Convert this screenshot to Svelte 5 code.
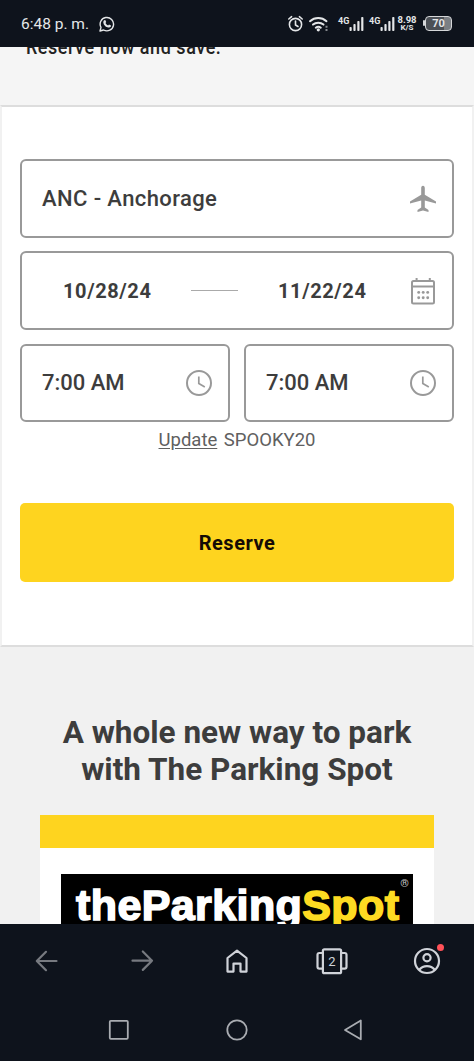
<script>
    let airport = "ANC - Anchorage";
    let startDate = "10/28/24";
    let endDate = "11/22/24";
    let times = ["7:00 AM", "7:00 AM"];
    let promoCode = "SPOOKY20";
    let tabCount = 2;

    // left edge of each signal indicator inside the status icons
    const signals = [41, 72];
    const bars = [4, 7, 10, 14];
    const dots = [8.5, 13, 17.5];
</script>

<div class="screen">
    <header class="status-bar">
        <span class="clock">6:48 p. m.</span>
        <svg class="whatsapp" width="16" height="16" viewBox="0 0 16 16">
            <path d="M1 15l1-3.600A6.700 6.700 0 1 1 4.600 14z" fill="none" stroke="currentColor" stroke-width="1.400" stroke-linejoin="round" />
            <path d="M5.200 4.200l1.100-.1.900 2-.7.9c.6 1.200 1.400 2 2.600 2.500l.9-.9 2 1-.1 1c-.7 1-2 1.300-3.500.7C6.200 10.500 4.800 8.800 4.400 6.900c-.2-1 0-2.100.8-2.700z" fill="currentColor" />
        </svg>
        <svg class="status-icons" width="109" height="24" viewBox="0 0 109 24">
            <g fill="none" stroke="currentColor" stroke-width="1.600" stroke-linecap="round">
                <circle cx="7.500" cy="12.500" r="6.100" />
                <path d="M7.500 9v4l2.500 1.500M.8 7L3.600 4.700M14.200 7l-2.800-2.300" />
                <path d="M22 9.200a12.500 12.500 0 0 1 16.500 0M25 12.600a8 8 0 0 1 10.500 0M27.800 15.700a4 4 0 0 1 5 0" stroke-width="2" />
            </g>
            <circle cx="30.300" cy="17.800" r="1.600" fill="currentColor" />
            <path d="M37.500 13.800h2v2h-2zM37.500 17h2v2h-2z" fill="#85898e" />
            {#each signals as x}
                <text x={x + 9} y="11.800" class="net">4G</text>
                {#each bars as h, i}
                    <rect x={x + 20.5 + i * 3.9} y={19 - h} width="2.200" height={h} rx=".8" fill="currentColor" />
                {/each}
            {/each}
        </svg>
        <span class="speed"><b>8.98</b><b>K/S</b></span>
        <span class="battery">70</span>
    </header>

    <main class="page">
        <section class="intro"><span>Reserve now and save.</span></section>

        <section class="booking">
            <div class="field">
                <span class="airport">{airport}</span>
                <svg width="28" height="28" viewBox="0 0 28 28">
                    <path d="M14 .8c1.300 0 1.800 1.100 1.800 2.400v6.600l11.200 6.600v2l-11.200-3v7.100l3.700 2.600v1.800L14 25.600l-5.500 1.300v-1.800l3.700-2.600v-7.100L1 18.400v-2l11.200-6.600V3.200C12.200 1.900 12.700.8 14 .8z" fill="#999" />
                </svg>
            </div>

            <div class="field dates">
                <span class="date">{startDate}</span>
                <span class="dash"></span>
                <span class="date end">{endDate}</span>
                <svg width="28" height="28" viewBox="0 0 28 28">
                    <g fill="none" stroke="#999" stroke-width="2">
                        <rect x="3" y="4" width="22" height="22.500" rx="1.500" />
                        <path d="M3 9.600h22M7.600 1v3M20.800 1v3" />
                    </g>
                    {#each dots as x}
                        <circle cx={x + 1.2} cy="15.400" r="1.450" fill="#999" />
                        <circle cx={x + 1.2} cy="20.800" r="1.450" fill="#999" />
                    {/each}
                </svg>
            </div>

            <div class="times">
                {#each times as time}
                    <div class="field">
                        <span class="time">{time}</span>
                        <svg width="28" height="28" viewBox="0 0 28 28">
                            <circle cx="14" cy="14" r="12" fill="none" stroke="#999" stroke-width="2" />
                            <path d="M13.800 7.500v7l6 3.500" fill="none" stroke="#999" stroke-width="1.700" />
                        </svg>
                    </div>
                {/each}
            </div>

            <p class="promo"><a href="#update">Update</a> <span>{promoCode}</span></p>
            <button class="reserve">Reserve</button>
        </section>

        <section class="about">
            <h2>A whole new way to park<br />with The Parking Spot</h2>
            <div class="card">
                <div class="logo">
                    <span class="brand">theParking<em>Spot</em></span>
                    <span class="registered">®</span>
                </div>
            </div>
        </section>
    </main>

    <footer>
        <nav class="browser-nav">
            <svg class="dim" width="32" height="32" viewBox="0 0 32 32">
                <path d="M25.500 16H6M15 6.800L5.800 16l9.200 9.200" />
            </svg>
            <svg class="dim" width="32" height="32" viewBox="0 0 32 32">
                <path d="M6.500 15.700H26M16.800 6.500l9.200 9.200-9.200 9.200" />
            </svg>
            <svg width="32" height="32" viewBox="0 0 32 32">
                <path d="M6.500 13L16 5.600l9.500 7.400v13.600h-6v-8h-7v8h-6z" />
            </svg>
            <svg width="32" height="32" viewBox="0 0 32 32">
                <rect x="6.900" y="4.300" width="18.200" height="23.900" rx="1.500" />
                <path d="M6.900 8H3.300q-1.800 0-1.800 1.800v12q0 1.800 1.800 1.800h3.600M25.100 8h3.600q1.800 0 1.800 1.800v12q0 1.800-1.800 1.800h-3.600" />
                <text x="16" y="20.500" text-anchor="middle">{tabCount}</text>
            </svg>
            <span class="profile">
                <svg width="32" height="32" viewBox="0 0 32 32">
                    <circle cx="16" cy="16" r="12" />
                    <circle cx="16" cy="12.800" r="3.600" />
                    <path d="M8.500 24.500c3.500-4.600 11.500-4.600 15 0" />
                </svg>
                <i class="alert"></i>
            </span>
        </nav>
        <nav class="system-nav">
            <svg width="28" height="28" viewBox="0 0 28 28">
                <rect x="4.800" y="4.800" width="18" height="18" rx="1" />
            </svg>
            <svg width="28" height="28" viewBox="0 0 28 28">
                <circle cx="14" cy="14" r="9.700" />
            </svg>
            <svg width="28" height="28" viewBox="0 0 28 28">
                <path d="M20.800 4.500v18.800L5 13.900z" />
            </svg>
        </nav>
    </footer>
</div>

<style>
    :global(body) {
        margin: 0;
        background: #0e131c;
    }

    .screen {
        display: flex;
        flex-direction: column;
        width: 474px;
        height: 1061px;
        overflow: hidden;
        font-family: Roboto, "Liberation Sans", sans-serif;
        color: #3d3d3d;
    }

    .screen * {
        box-sizing: border-box;
    }

    svg {
        display: block;
        flex: none;
    }

    .status-bar {
        display: flex;
        align-items: center;
        height: 47px;
        flex: none;
        padding: 0 21px;
        background: #0e131c;
        color: #e4e6e8;
    }

    .clock {
        width: 78px;
        font-size: 15.5px;
        white-space: nowrap;
    }

    .status-icons {
        margin-left: 173px;
        overflow: visible;
    }

    .net {
        font-size: 9px;
        font-weight: 700;
        fill: currentColor;
    }

    .speed {
        display: flex;
        flex-direction: column;
        align-items: center;
        width: 20px;
        font-size: 9.5px;
        line-height: 8px;
    }

    .speed b:last-child {
        font-size: 8px;
        line-height: 7px;
    }

    .battery {
        position: relative;
        width: 27px;
        height: 15px;
        margin-left: 8px;
        flex: none;
        border: 1.5px solid #d5d7d9;
        border-radius: 4px;
        background: linear-gradient(90deg, #4c5056 72%, #7b7f84 72%);
        font-size: 11px;
        font-weight: 700;
        line-height: 13px;
        text-align: center;
    }

    .battery::before {
        content: "";
        position: absolute;
        left: -3px;
        top: 3px;
        width: 2px;
        height: 6px;
        border-radius: 1px;
        background: #d5d7d9;
    }

    .page {
        flex: none;
        height: 877px;
        overflow: hidden;
        background: #f1f1f1;
    }

    .intro {
        height: 58px;
        padding-left: 26px;
        overflow: hidden;
        background: #f5f5f5;
        color: #222;
        font-size: 20px;
        line-height: 22px;
    }

    .intro span {
        display: block;
        width: 220px;
        margin-top: -11px;
        letter-spacing: 0.6px;
        white-space: nowrap;
        font-weight: 500;
        transform: scaleX(0.9);
        transform-origin: left;
    }

    .booking {
        height: 542px;
        padding: 52px 18px 0;
        border: 2px solid #f1f1f1;
        border-top-color: #ddd;
        border-bottom-color: #ddd;
        background: #fff;
    }

    .field {
        display: flex;
        align-items: center;
        justify-content: space-between;
        height: 79px;
        padding: 0 15px 0 20px;
        border: 2px solid #999;
        border-radius: 6px;
    }

    .airport {
        font-size: 22px;
        font-weight: 500;
        letter-spacing: 0.4px;
    }

    .dates {
        margin: 13px 0 14px;
        padding-left: 41px;
    }

    .date {
        width: 88px;
        font-size: 20px;
        font-weight: 700;
        letter-spacing: 0.6px;
        white-space: nowrap;
    }

    .date.end {
        margin-right: 3px;
    }

    .dash {
        width: 47px;
        height: 1px;
        background: #aaa;
    }

    .times {
        display: grid;
        grid-template-columns: 210px 210px;
        gap: 14px;
    }

    .times .field {
        height: 78px;
    }

    .time {
        margin-top: -1px;
        font-size: 22px;
        font-weight: 500;
    }

    .promo {
        margin: 6px 0 0;
        height: 24px;
        font-size: 18.5px;
        line-height: 24px;
        text-align: center;
        word-spacing: 2px;
        color: #606060;
    }

    .promo a {
        color: inherit;
        text-underline-offset: 2px;
    }

    .reserve {
        display: block;
        width: 100%;
        height: 79px;
        margin-top: 51px;
        border: 0;
        border-radius: 5px;
        background: #fed41f;
        color: #150b05;
        font: 700 20px Roboto, sans-serif;
        letter-spacing: 0.5px;
    }

    .about {
        padding: 67px 40px 0;
    }

    h2 {
        margin: 0;
        font-size: 31.5px;
        font-weight: 700;
        line-height: 37px;
        text-align: center;
        white-space: nowrap;
    }

    .card {
        height: 160px;
        margin: 27px 0 0;
        padding: 26px 21px 0;
        border-top: 33px solid #fed41f;
        background: #fff;
    }

    .logo {
        position: relative;
        height: 90px;
        padding: 5px 0 0 15px;
        background: #000;
    }

    .brand {
        color: #fff;
        font: 700 43px/52px "Liberation Sans", Arial, sans-serif;
        letter-spacing: 0.4px;
        white-space: nowrap;
        -webkit-text-stroke: 1.6px currentColor;
    }

    .brand em {
        font-style: normal;
        color: #fedb22;
    }

    .registered {
        position: absolute;
        right: 4px;
        top: 3px;
        color: #bbb;
        font-size: 11px;
        font-weight: 700;
    }

    footer {
        flex: none;
        height: 137px;
        background: #0e131c;
    }

    footer svg {
        fill: none;
        stroke: #d0d3d9;
        stroke-width: 2.2;
        stroke-linejoin: round;
        stroke-linecap: round;
    }

    footer svg.dim {
        stroke: #777a80;
    }

    footer text {
        fill: #d0d3d9;
        stroke: none;
        font-size: 13px;
    }

    .browser-nav {
        display: flex;
        justify-content: space-between;
        padding: 21px 31px 0;
    }

    .profile {
        position: relative;
    }

    .alert {
        position: absolute;
        top: -1px;
        right: -1px;
        width: 7px;
        height: 7px;
        border-radius: 50%;
        background: #ff5158;
    }

    .system-nav {
        display: flex;
        justify-content: space-between;
        padding: 39px 106px 0 105px;
    }

    .system-nav svg {
        stroke: #a9acb1;
        stroke-width: 1.8;
    }
</style>
